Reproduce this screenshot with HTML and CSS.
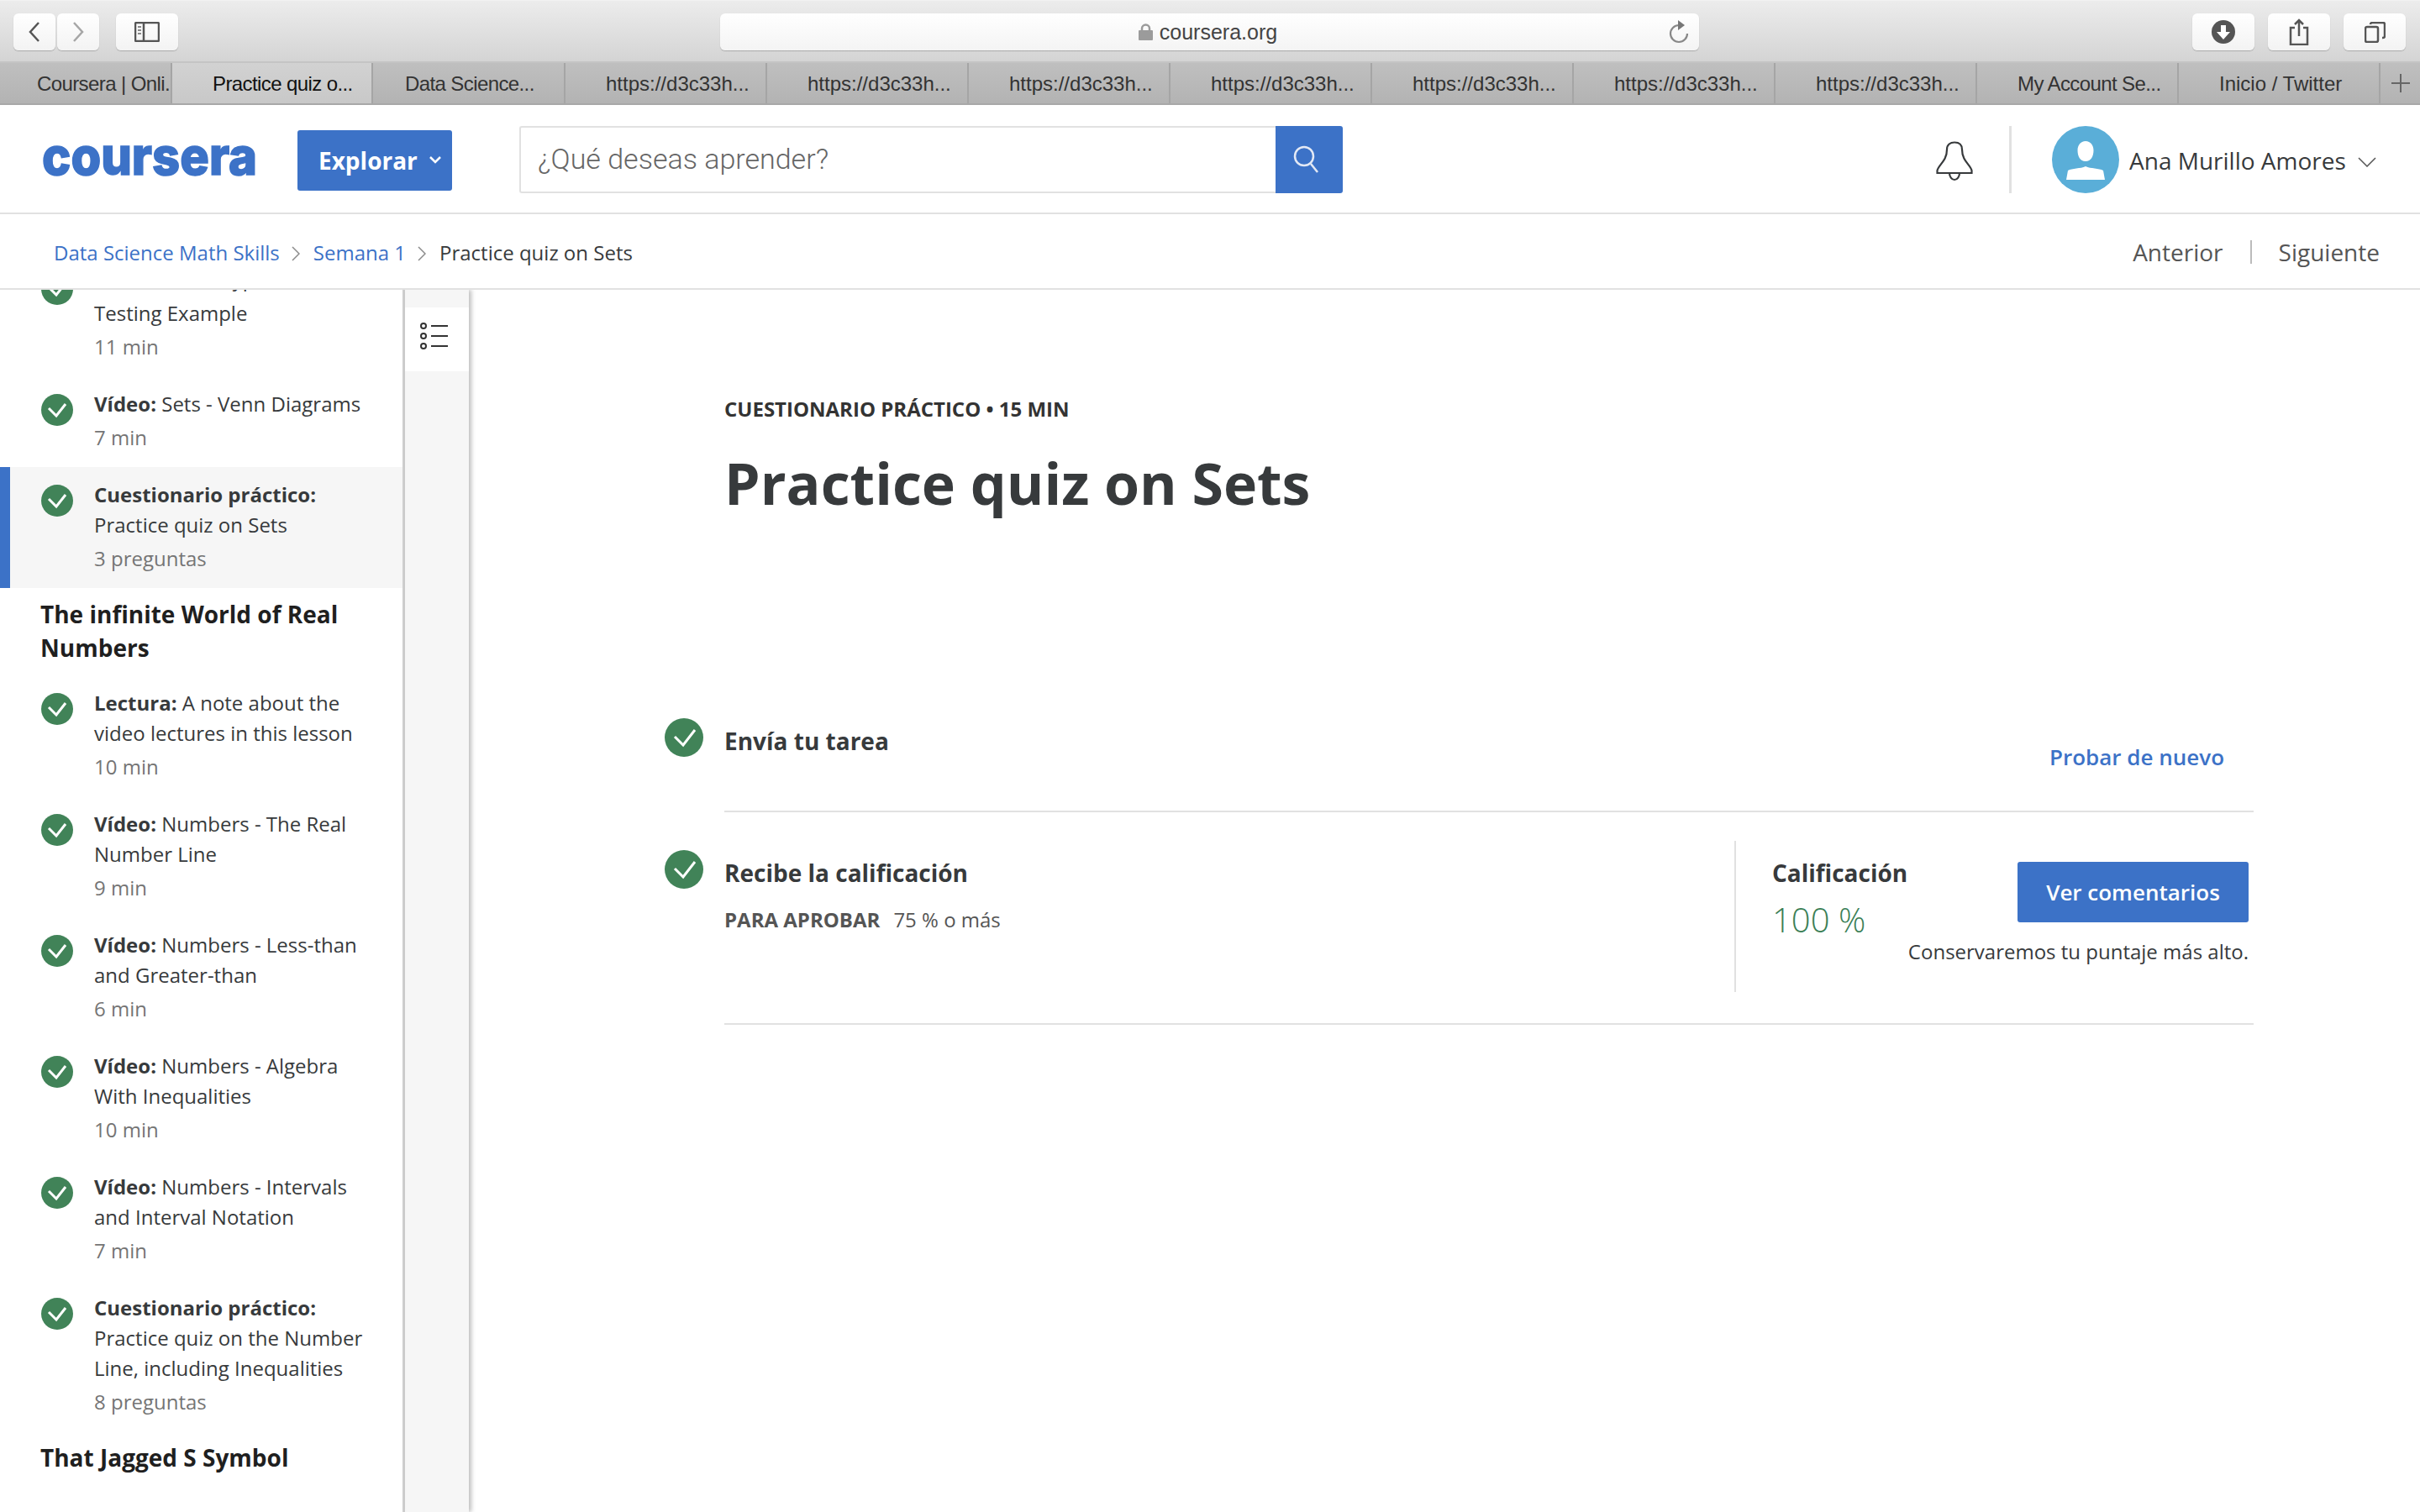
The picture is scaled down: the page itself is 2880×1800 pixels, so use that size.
FILE: index.html
```html
<!DOCTYPE html>
<html lang="es">
<head>
<meta charset="utf-8">
<title>Practice quiz on Sets</title>
<link rel="stylesheet" href="styles.css">
</head>
<body>
<div class="chrome">
  <div class="toolbar">
    <div class="nav-pair">
      <span class="tb-btn tb-nav"><svg width="14" height="24" viewBox="0 0 14 24"><path d="M12 1 2 12l10 11" class="ic-dark"/></svg></span>
      <span class="tb-btn tb-nav"><svg width="14" height="24" viewBox="0 0 14 24"><path d="M2 1l10 11L2 23" class="ic-light"/></svg></span>
    </div>
    <span class="tb-btn tb-side"><svg width="30" height="24" viewBox="0 0 30 24"><rect x="1" y="1" width="28" height="22" rx="1.500" class="ic-dark"/><path d="M11 1v22" class="ic-dark"/><path d="M4 6h4M4 10h4M4 14h4" class="ic-dots"/></svg></span>
    <div class="urlbar">
      <span class="url-center"><svg width="17" height="20" viewBox="0 0 17 20"><path d="M4 9V6a4.500 4.500 0 0 1 9 0v3" class="ic-lock"/><rect y="8" width="17" height="12" rx="1" fill="#9b9b9b"/></svg><span class="url-text">coursera.org</span></span>
      <svg class="reload" width="24" height="28" viewBox="0 0 24 28"><path d="M12 6a10 10 0 1 0 10 10" class="ic-reload"/><path d="M11 0l8 6-8 6z" fill="#777"/></svg>
    </div>
    <div class="tb-right">
      <span class="tb-btn tb-side"><svg width="28" height="28" viewBox="0 0 28 28"><circle cx="14" cy="14" r="14" fill="#555"/><path d="M11 6h6v8h5l-8 9-8-9h5z" fill="#fff"/></svg></span>
      <span class="tb-btn tb-side"><svg width="24" height="32" viewBox="0 0 24 32"><path d="M7 11H2v20h20V11h-5M12 21V2M7 7l5-5 5 5" class="ic-dark"/></svg></span>
      <span class="tb-btn tb-side"><svg width="25" height="25" viewBox="0 0 25 25"><rect x="1" y="6" width="15" height="18" rx="2" class="ic-dark"/><path d="M7 3V3a2 2 0 0 1 2-2h13a2 2 0 0 1 2 2v14a2 2 0 0 1-2 2h-1" class="ic-dark"/></svg></span>
    </div>
  </div>
  <div class="tabs">
    <span class="tab tab-first tab-tight">Coursera | Onli.</span>
    <span class="tab tab-active tab-tight">Practice quiz o...</span>
    <span class="tab tab-short tab-tight">Data Science...</span>
    <span class="tab">https://d3c33h...</span>
    <span class="tab">https://d3c33h...</span>
    <span class="tab">https://d3c33h...</span>
    <span class="tab">https://d3c33h...</span>
    <span class="tab">https://d3c33h...</span>
    <span class="tab">https://d3c33h...</span>
    <span class="tab">https://d3c33h...</span>
    <span class="tab tab-tight">My Account Se...</span>
    <span class="tab">Inicio / Twitter</span>
    <span class="tab-plus"><svg width="22" height="22" viewBox="0 0 22 22"><path d="M11 0v22M0 11h22" class="ic-plus"/></svg></span>
  </div>
</div>

<header class="site-header">
  <svg class="logo" width="256" height="46" viewBox="0 0 256 46"><text x="0" y="41" textLength="256" lengthAdjust="spacingAndGlyphs" class="logo-text">coursera</text></svg>
  <span class="explore">Explorar<svg width="16" height="11" viewBox="0 0 16 11"><path d="M2 2l6 6 6-6" class="ic-white"/></svg></span>
  <div class="search">
    <span class="search-input">¿Qué deseas aprender?</span>
    <span class="search-btn"><svg width="32" height="34" viewBox="0 0 32 34"><circle cx="13" cy="13" r="11" class="ic-search"/><path d="M21 22l8 10" class="ic-search"/></svg></span>
  </div>
  <svg class="bell" width="44" height="48" viewBox="0 0 44 48"><path d="M1.500 38v-3C3 28 13 24 13 10 13 4 17 1.500 22 1.500S31 4 31 10c0 14 10 18 11.500 25v3z" class="ic-bell"/><path d="M16 38a6 8 0 0 0 12 0" class="ic-bell"/></svg>
  <span class="head-div"></span>
  <svg class="avatar" width="80" height="80" viewBox="0 0 80 80"><circle cx="40" cy="40" r="40" fill="#5aaed8"/><path d="M40 18c6 0 9.500 5 9.500 11 0 7-3 13-9.500 13s-9.500-6-9.500-13c0-6 3.500-11 9.500-11zM17 64l2-11c5-3 15-2 21-5 6 3 16 2 21 5l2 11z" fill="#fff"/></svg>
  <span class="user-name">Ana Murillo Amores</span>
  <svg class="user-chev" width="22" height="12" viewBox="0 0 22 12"><path d="M1 1l10 10L21 1" class="ic-thin"/></svg>
</header>

<nav class="crumbs">
  <a class="crumb-link">Data Science Math Skills</a>
  <svg class="crumb-sep" width="10" height="18" viewBox="0 0 10 18"><path d="M1 1l8 8-8 8" class="ic-sep"/></svg>
  <a class="crumb-link">Semana 1</a>
  <svg class="crumb-sep" width="10" height="18" viewBox="0 0 10 18"><path d="M1 1l8 8-8 8" class="ic-sep"/></svg>
  <span class="crumb-current">Practice quiz on Sets</span>
  <span class="pager">
    <span class="pager-item">Anterior</span>
    <span class="pager-div"></span>
    <span class="pager-item">Siguiente</span>
  </span>
</nav>

<div class="body-row">
  <aside class="sidebar">
    <div class="side-list">
      <div class="item item-clipped">
        <svg class="check" width="38" height="38" viewBox="0 0 38 38"><circle cx="19" cy="19" r="19" fill="#418358"/><path d="M9 17l9 9 11-14" class="ic-check"/></svg>
        <div class="item-text"><div class="clip-line"><b>Vídeo:</b> Sets - Hypothesis</div>Testing Example<div class="dur">11 min</div></div>
      </div>
      <div class="item">
        <svg class="check" width="38" height="38" viewBox="0 0 38 38"><circle cx="19" cy="19" r="19" fill="#418358"/><path d="M9 17l9 9 11-14" class="ic-check"/></svg>
        <div class="item-text"><b>Vídeo:</b> Sets - Venn Diagrams<div class="dur">7 min</div></div>
      </div>
      <div class="item item-active">
        <svg class="check" width="38" height="38" viewBox="0 0 38 38"><circle cx="19" cy="19" r="19" fill="#418358"/><path d="M9 17l9 9 11-14" class="ic-check"/></svg>
        <div class="item-text"><b>Cuestionario práctico:</b> Practice quiz on Sets<div class="dur">3 preguntas</div></div>
      </div>
      <h3 class="side-head">The infinite World of Real Numbers</h3>
      <div class="item">
        <svg class="check" width="38" height="38" viewBox="0 0 38 38"><circle cx="19" cy="19" r="19" fill="#418358"/><path d="M9 17l9 9 11-14" class="ic-check"/></svg>
        <div class="item-text"><b>Lectura:</b> A note about the video lectures in this lesson<div class="dur">10 min</div></div>
      </div>
      <div class="item">
        <svg class="check" width="38" height="38" viewBox="0 0 38 38"><circle cx="19" cy="19" r="19" fill="#418358"/><path d="M9 17l9 9 11-14" class="ic-check"/></svg>
        <div class="item-text"><b>Vídeo:</b> Numbers - The Real Number Line<div class="dur">9 min</div></div>
      </div>
      <div class="item">
        <svg class="check" width="38" height="38" viewBox="0 0 38 38"><circle cx="19" cy="19" r="19" fill="#418358"/><path d="M9 17l9 9 11-14" class="ic-check"/></svg>
        <div class="item-text"><b>Vídeo:</b> Numbers - Less-than and Greater-than<div class="dur">6 min</div></div>
      </div>
      <div class="item">
        <svg class="check" width="38" height="38" viewBox="0 0 38 38"><circle cx="19" cy="19" r="19" fill="#418358"/><path d="M9 17l9 9 11-14" class="ic-check"/></svg>
        <div class="item-text"><b>Vídeo:</b> Numbers - Algebra With Inequalities<div class="dur">10 min</div></div>
      </div>
      <div class="item">
        <svg class="check" width="38" height="38" viewBox="0 0 38 38"><circle cx="19" cy="19" r="19" fill="#418358"/><path d="M9 17l9 9 11-14" class="ic-check"/></svg>
        <div class="item-text"><b>Vídeo:</b> Numbers - Intervals and Interval Notation<div class="dur">7 min</div></div>
      </div>
      <div class="item">
        <svg class="check" width="38" height="38" viewBox="0 0 38 38"><circle cx="19" cy="19" r="19" fill="#418358"/><path d="M9 17l9 9 11-14" class="ic-check"/></svg>
        <div class="item-text"><b>Cuestionario práctico:</b> Practice quiz on the Number Line, including Inequalities<div class="dur">8 preguntas</div></div>
      </div>
      <h3 class="side-head">That Jagged S Symbol</h3>
    </div>
  </aside>
  <div class="strip">
    <span class="strip-tile"><svg width="34" height="32" viewBox="0 0 34 32"><circle cx="4" cy="4" r="3" class="ic-list"/><circle cx="4" cy="16" r="3" class="ic-list"/><circle cx="4" cy="28" r="3" class="ic-list"/><path d="M13 4h20M13 16h20M13 28h20" class="ic-list"/></svg></span>
  </div>
  <main class="content">
    <div class="kicker">CUESTIONARIO PRÁCTICO • 15 MIN</div>
    <h1 class="title">Practice quiz on Sets</h1>
    <section class="step step-one">
      <svg width="46" height="46" viewBox="0 0 46 46"><circle cx="23" cy="23" r="23" fill="#418358"/><path d="M12 22l10 10 14-18" class="ic-check"/></svg>
      <div class="step-body step-body-one">
        <div class="step-title">Envía tu tarea</div>
        <a class="retry">Probar de nuevo</a>
      </div>
    </section>
    <section class="step step-two">
      <svg width="46" height="46" viewBox="0 0 46 46"><circle cx="23" cy="23" r="23" fill="#418358"/><path d="M12 22l10 10 14-18" class="ic-check"/></svg>
      <div class="step-body step-body-two">
        <div class="req-col">
          <div class="step-title">Recibe la calificación</div>
          <div class="req"><b>PARA APROBAR</b><span class="req-val">75 % o más</span></div>
        </div>
        <div class="grade">
          <div class="grade-left">
            <div class="grade-label">Calificación</div>
            <div class="grade-val">100 %</div>
          </div>
          <div class="grade-right">
            <span class="btn">Ver comentarios</span>
            <div class="note">Conservaremos tu puntaje más alto.</div>
          </div>
        </div>
      </div>
    </section>
  </main>
</div>
</body>
</html>
```
FILE: styles.css
```css
* { box-sizing: border-box; }
html, body { margin: 0; padding: 0; height: 1800px; overflow: hidden; background: #fff; }
body { font-family: "Open Sans", sans-serif; color: #373a3c; }
svg { display: block; flex: none; }

.ic-dark { fill: none; stroke: #555; stroke-width: 2.5; }
.ic-light { fill: none; stroke: #a6a6a6; stroke-width: 2.5; }
.ic-dots { fill: none; stroke: #888; stroke-width: 2; }
.ic-lock { fill: none; stroke: #9b9b9b; stroke-width: 2.5; }
.ic-reload { fill: none; stroke: #888; stroke-width: 2.2; }
.ic-plus { fill: none; stroke: #666; stroke-width: 2; }
.ic-white { fill: none; stroke: #fff; stroke-width: 2.5; }
.ic-search { fill: none; stroke: #e3e9f5; stroke-width: 2.5; }
.ic-bell { fill: none; stroke: #373a3c; stroke-width: 2.2; }
.ic-thin { fill: none; stroke: #555; stroke-width: 1.5; }
.ic-sep { fill: none; stroke: #8a8a8a; stroke-width: 1.5; }
.ic-check { fill: none; stroke: #fff; stroke-width: 3; }
.ic-list { fill: none; stroke: #333; stroke-width: 2; }

.chrome { height: 125px; font-family: "Liberation Sans", sans-serif; }
.toolbar { height: 75px; display: flex; align-items: flex-start; padding: 15px 17px 0 16px; background: linear-gradient(#ececec, #d4d4d4); border-top: 1px solid #f2f2f2; border-bottom: 2px solid #c4c4c4; }
.nav-pair { display: flex; gap: 2px; }
.tb-btn { height: 44px; display: flex; align-items: center; justify-content: center; background: linear-gradient(#fff, #f3f3f3); border-radius: 6px; box-shadow: 0 1px 1px #aaa; }
.tb-nav { width: 50px; }
.tb-side { width: 74px; }
.nav-pair + .tb-side { margin-left: 20px; }
.urlbar { width: 1166px; height: 44px; margin-left: 645px; position: relative; display: flex; align-items: center; justify-content: center; background: linear-gradient(#fff, #f4f4f4); border-radius: 6px; box-shadow: 0 1px 1px #aaa; }
.url-center { display: flex; align-items: center; gap: 8px; margin-left: -4px; }
.url-text { font-size: 25px; color: #444; }
.reload { position: absolute; right: 12px; top: 8px; }
.tb-right { display: flex; gap: 16px; margin-left: 587px; }

.tabs { height: 50px; display: flex; background: linear-gradient(#bfbfbf, #b3b3b3); border-bottom: 2px solid #a8a8a8; }
.tab { width: 240px; flex: none; display: flex; align-items: center; padding: 2px 0 0 48px; font-size: 24px; color: #333; white-space: nowrap; overflow: hidden; border-right: 2px solid #a5a5a5; }
.tab-tight { letter-spacing: -.6px; }
.tab-first { width: 205px; padding-left: 44px; }
.tab-active { width: 239px; background: linear-gradient(#d2d2d2, #c8c8c8); color: #111; }
.tab-short { width: 229px; padding-left: 38px; }
.tab-plus { flex: 1; display: flex; align-items: center; justify-content: center; }

.site-header { height: 130px; display: flex; align-items: center; padding: 3px 0 0 50px; border-bottom: 2px solid #e1e1e1; }
.logo { margin-right: 48px; margin-top: -2px; }
.logo-text { font-family: Inter, sans-serif; font-weight: 800; font-size: 62px; fill: #3c72c7; stroke: #3c72c7; stroke-width: 1.5; }
.explore { width: 184px; height: 72px; display: flex; align-items: center; gap: 13px; padding-left: 25px; margin-right: 80px; background: #3c72c7; color: #fff; font-size: 28px; font-weight: 700; border-radius: 3px; }
.search { width: 980px; height: 80px; display: flex; margin-top: -1px; }
.search-input { flex: 1; display: flex; align-items: center; padding: 0 0 2px 20px; font-size: 34px; font-weight: 300; color: #666; font-family: Roboto, sans-serif; border: 2px solid #e1e1e1; border-right: 0; border-radius: 3px 0 0 3px; }
.search-btn { width: 80px; display: flex; align-items: center; justify-content: center; padding-right: 6px; background: #3c72c7; border-radius: 0 3px 3px 0; }
.bell { margin-left: 706px; margin-top: 2px; }
.head-div { width: 3px; height: 80px; background: #e1e1e1; margin-left: 43px; margin-top: -1px; }
.avatar { margin-left: 48px; margin-top: -1px; }
.user-name { margin-left: 12px; font-size: 28px; color: #373a3c; white-space: nowrap; }
.user-chev { margin-left: 14px; margin-top: 4px; }

.crumbs { height: 90px; display: flex; align-items: center; padding: 2px 48px 0 64px; border-bottom: 2px solid #e1e1e1; font-size: 24px; }
.crumb-link { color: #3c72c7; }
.crumb-current { color: #373a3c; }
.crumb-sep { margin: 4px 16px 0 14px; }
.pager { margin-left: auto; display: flex; align-items: center; font-size: 28px; color: #555; }
.pager-div { width: 2px; height: 28px; background: #bbb; margin: 0 32px; }

.body-row { height: 1455px; display: flex; overflow: hidden; }
.sidebar { width: 482px; flex: none; overflow: hidden; border-right: 3px solid #cfcfcf; }
.side-list { margin-top: -46px; }
.item { display: flex; gap: 25px; padding: 15px 20px 17px 49px; }
.item-active { background: #f6f6f6; border-left: 12px solid #3c72c7; padding-left: 37px; }
.check { margin-top: 6px; }
.item-clipped .check { margin-top: 11px; }
.clip-line { margin-bottom: 5px; }
.item-text { font-size: 24px; line-height: 36px; color: #373a3c; }
.dur { margin-top: 4px; color: #757575; }
.side-head { margin: 11px 30px 13px 48px; font-size: 28px; line-height: 40px; font-weight: 700; color: #1f1f1f; }
.strip { width: 76px; flex: none; padding-top: 21px; background: #f6f6f6; box-shadow: 3px 0 5px rgba(0, 0, 0, .25); position: relative; }
.strip-tile { display: flex; height: 76px; align-items: center; justify-content: center; padding: 0 6px 8px 0; background: #fff; }

.content { flex: 1; padding: 124px 198px 0 233px; }
.kicker { font-size: 24px; line-height: 36px; font-weight: 700; color: #333; padding-left: 71px; }
.title { margin: 25px 0 0 71px; font-size: 68px; line-height: 90px; font-weight: 700; color: #373a3c; }
.step { display: flex; gap: 25px; align-items: flex-start; }
.step-one { margin-top: 235px; }
.step-two svg { margin-top: 45px; }
.step-body { flex: 1; border-bottom: 2px solid #e1e1e1; }
.step-body-one { height: 112px; display: flex; justify-content: space-between; padding-top: 7px; }
.step-body-two { display: flex; justify-content: space-between; padding: 34px 0 37px; }
.step-title { font-size: 28px; line-height: 40px; font-weight: 700; color: #373a3c; }
.retry { margin: 21px 35px 0 0; font-size: 26px; line-height: 36px; font-weight: 600; color: #3c72c7; }
.req-col { padding-top: 18px; }
.req { margin-top: 18px; font-size: 24px; line-height: 36px; color: #555; }
.req-val { margin-left: 16px; }
.grade { width: 618px; height: 180px; display: flex; justify-content: space-between; padding: 18px 6px 0 43px; border-left: 2px solid #e1e1e1; }
.grade-label { font-size: 28px; line-height: 40px; font-weight: 700; color: #373a3c; }
.grade-val { margin-top: 8px; font-size: 40px; line-height: 56px; font-weight: 300; color: #3b8056; }
.grade-right { display: flex; flex-direction: column; align-items: flex-end; padding-top: 7px; }
.btn { width: 275px; height: 72px; flex: none; display: flex; align-items: center; justify-content: center; background: #3c72c7; color: #fff; font-size: 26px; font-weight: 600; border-radius: 3px; }
.note { margin-top: 17px; font-size: 24px; line-height: 36px; color: #373a3c; white-space: nowrap; }
```
